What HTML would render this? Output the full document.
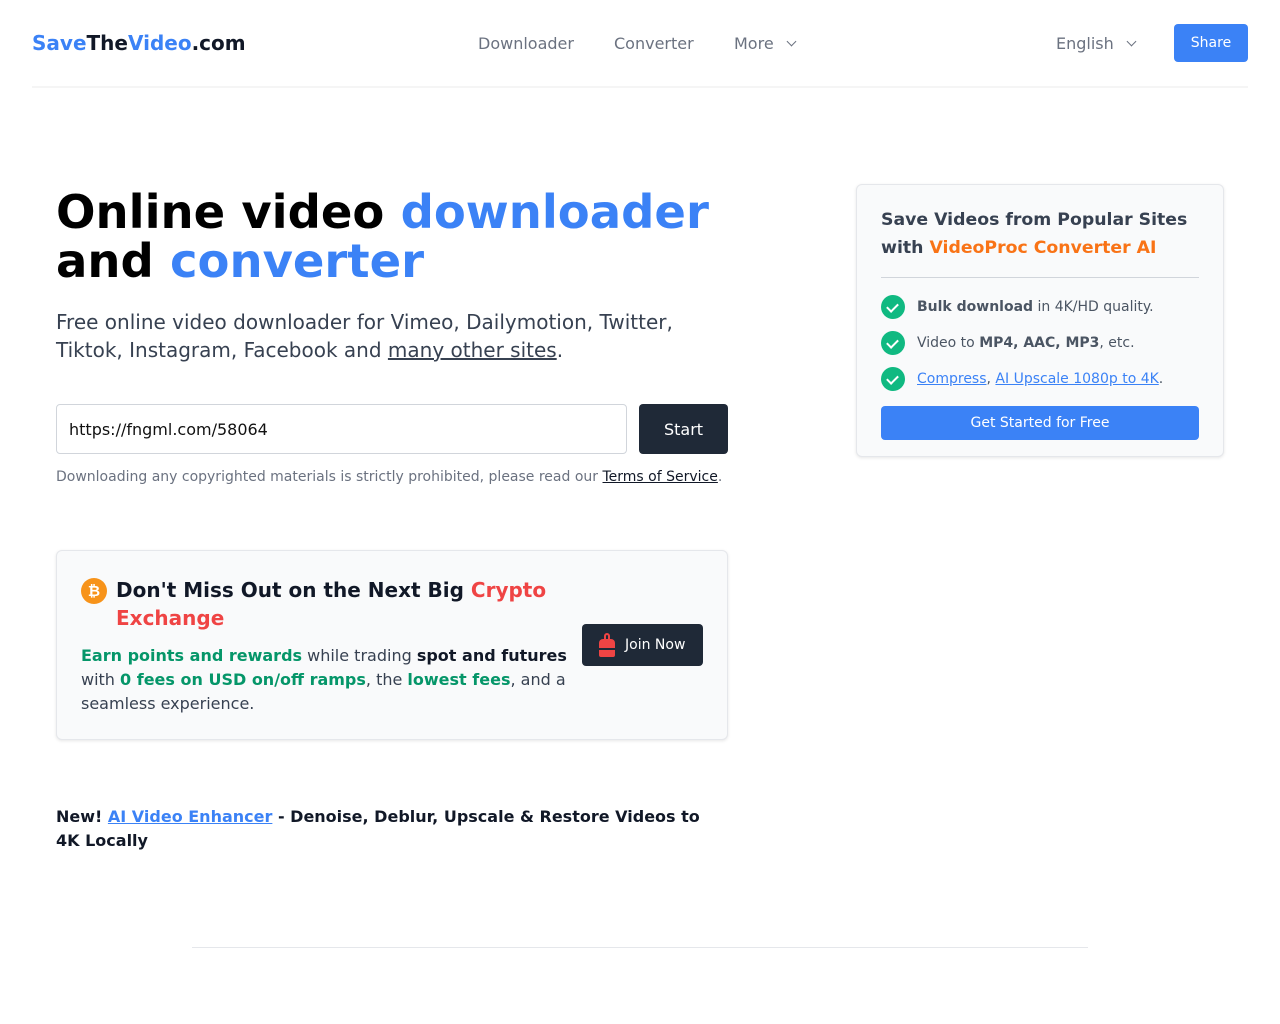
<!DOCTYPE html>
<html><head><meta charset="utf-8"><style>
*{box-sizing:border-box;margin:0;padding:0}
body{width:1280px;height:1024px;background:#fff;font-family:"DejaVu Sans","Liberation Sans",sans-serif;color:#111827;position:relative;overflow:hidden}
.abs{position:absolute}
a{color:inherit}
.nav{font-size:16px;color:#6b7280;top:34px}
.chev{display:inline-block;width:7px;height:7px;border-right:1.5px solid #6b7280;border-bottom:1.5px solid #6b7280;transform:rotate(45deg);margin-left:14px;position:relative;top:-4px}
.check{display:inline-block;width:24px;height:24px;border-radius:50%;background:#10b981;position:absolute;left:0;top:-4px}
.check:after{content:"";position:absolute;left:8px;top:6px;width:5px;height:9px;border-right:2px solid #fff;border-bottom:2px solid #fff;transform:rotate(45deg)}
.li{position:absolute;left:24px;font-size:14px;color:#4b5563;padding-left:36px}
.g{color:#059669;font-weight:bold}
</style></head><body>
<div class="abs" style="left:32px;top:31px;font-size:20px;font-weight:bold;color:#111827"><span style="color:#3b82f6">Save</span>The<span style="color:#3b82f6">Video</span>.com</div>
<div class="abs nav" style="left:478px">Downloader</div>
<div class="abs nav" style="left:614px">Converter</div>
<div class="abs nav" style="left:734px">More<span class="chev"></span></div>
<div class="abs nav" style="left:1056px">English<span class="chev"></span></div>
<div class="abs" style="left:1174px;top:24px;width:74px;height:38px;background:#3b82f6;border-radius:4px;color:#fff;font-size:14px;text-align:center;line-height:38px">Share</div>
<div class="abs" style="left:32px;top:86px;width:1216px;height:2px;background:#f5f5f5"></div>

<div class="abs" style="left:56px;top:188px;font-size:46.5px;font-weight:bold;line-height:49px;color:#000">Online video <span style="color:#3b82f6">downloader</span><br>and <span style="color:#3b82f6">converter</span></div>
<div class="abs" style="left:56px;top:308px;font-size:20px;line-height:28px;color:#374151;width:680px">Free online video downloader for Vimeo, Dailymotion, Twitter, Tiktok, Instagram, Facebook and <a href="#" style="text-decoration:underline">many other sites</a>.</div>
<div class="abs" style="left:56px;top:404px;width:571px;height:50px;border:1px solid #d1d5db;border-radius:4px;font-size:16px;line-height:50px;padding-left:12px;color:#111">https://fngml.com/58064</div>
<div class="abs" style="left:639px;top:404px;width:89px;height:50px;background:#1f2937;border-radius:4px;color:#fff;font-size:16px;line-height:51px;text-align:center">Start</div>
<div class="abs" style="left:56px;top:469px;font-size:14px;color:#6b7280">Downloading any copyrighted materials is strictly prohibited, please read our <a href="#" style="color:#111827;text-decoration:underline">Terms of Service</a>.</div>

<div class="abs" style="left:56px;top:550px;width:672px;height:190px;background:#f9fafb;border:1px solid #e5e7eb;border-radius:6px;box-shadow:0 1px 3px rgba(0,0,0,.1)">
 <div class="abs" style="left:24px;top:27px;width:26px;height:26px;border-radius:50%;background:#f7931a;color:#fff;font-size:15px;font-weight:bold;text-align:center;line-height:26px">₿</div>
 <div class="abs" style="left:59px;top:25px;font-size:20px;font-weight:bold;line-height:28px;width:460px">Don't Miss Out on the Next Big <span style="color:#ef4444">Crypto Exchange</span></div>
 <div class="abs" style="left:24px;top:93px;font-size:16px;line-height:24px;color:#374151;width:500px"><span class="g">Earn points and rewards</span> while trading <b style="color:#111827">spot and futures</b> with <span class="g">0 fees on USD on/off ramps</span>, the <span class="g">lowest fees</span>, and a seamless experience.</div>
 <div class="abs" style="left:525px;top:73px;width:121px;height:42px;background:#1f2937;border-radius:4px;color:#fff;font-size:14px;line-height:43px;padding-left:43px">Join Now
  <div class="abs" style="left:17px;top:9px;width:16px;height:24px"><div style="position:absolute;left:5px;top:0;width:6px;height:8px;border:2px solid #ef4444;border-radius:4px 4px 0 0"></div><div style="position:absolute;left:0;top:6px;width:16px;height:18px;background:#ef4444;border-radius:4px 4px 2px 2px"></div><div style="position:absolute;left:0;top:15px;width:16px;height:1.5px;background:#1f2937"></div></div>
 </div>
</div>

<div class="abs" style="left:56px;top:805px;font-size:16px;font-weight:bold;line-height:24px;width:660px">New! <a href="#" style="color:#3b82f6;text-decoration:underline">AI Video Enhancer</a> - Denoise, Deblur, Upscale &amp; Restore Videos to 4K Locally</div>

<div class="abs" style="left:856px;top:184px;width:368px;height:273px;background:#f9fafb;border:1px solid #e5e7eb;border-radius:6px;box-shadow:0 1px 3px rgba(0,0,0,.1)">
 <div class="abs" style="left:24px;top:21px;font-size:17.3px;font-weight:bold;line-height:28px;color:#374151;width:330px">Save Videos from Popular Sites with <span style="color:#f97316">VideoProc Converter AI</span></div>
 <div class="abs" style="left:24px;top:92px;width:318px;height:1px;background:#d1d5db"></div>
 <div class="li" style="top:114px"><span class="check"></span><b>Bulk download</b> in 4K/HD quality.</div>
 <div class="li" style="top:150px"><span class="check"></span>Video to <b>MP4, AAC, MP3</b>, etc.</div>
 <div class="li" style="top:186px"><span class="check"></span><a href="#" style="color:#3b82f6">Compress</a>, <a href="#" style="color:#3b82f6">AI Upscale 1080p to 4K</a>.</div>
 <div class="abs" style="left:24px;top:221px;width:318px;height:34px;background:#3b82f6;border-radius:4px;color:#fff;font-size:14px;text-align:center;line-height:35px">Get Started for Free</div>
</div>

<div class="abs" style="left:192px;top:947px;width:896px;height:1px;background:#e5e7eb"></div>
</body></html>
